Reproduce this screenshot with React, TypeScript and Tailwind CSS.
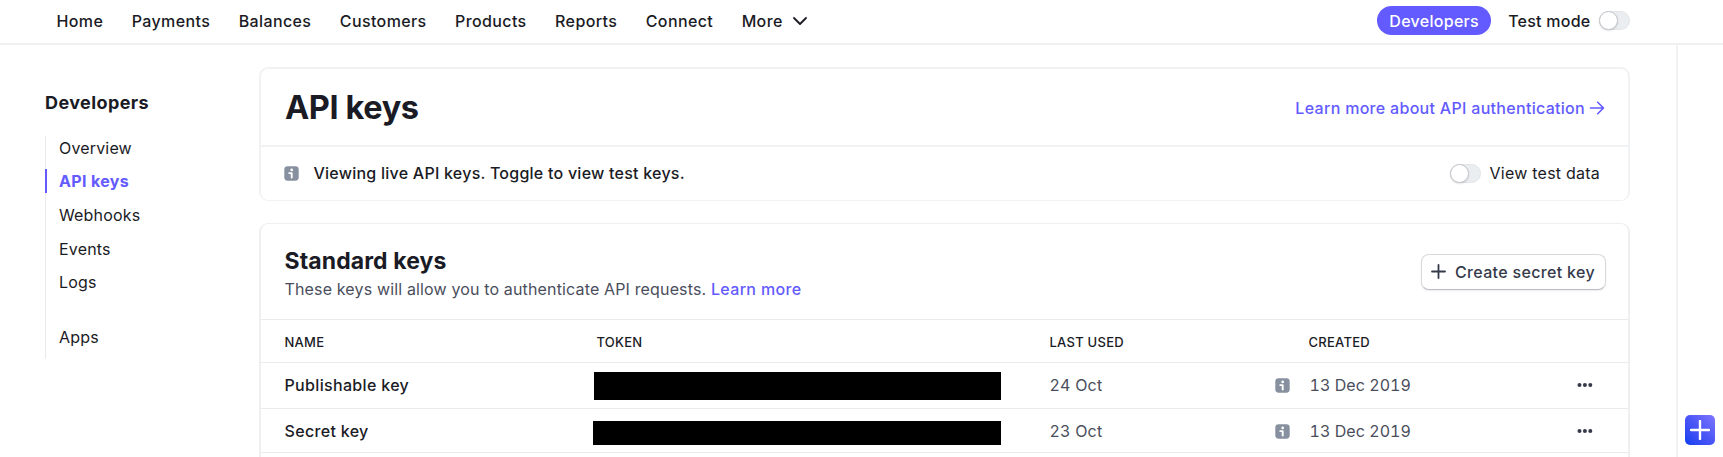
const NAV = ["Home", "Payments", "Balances", "Customers", "Products", "Reports", "Connect"];

const ROWS = [
  {
    name: "Publishable key",
    used: "24 Oct",
    created: "13 Dec 2019",
    row: "h-[46px] pb-px",
    bar: "ml-px w-[407px] h-[28px] mt-px",
  },
  {
    name: "Secret key",
    used: "23 Oct",
    created: "13 Dec 2019",
    row: "h-[44px] pt-px",
    bar: "w-[408px] h-[24px] mt-[4px]",
  },
];

const COLUMNS =
  "grid grid-cols-[308px_457px_225px_35px_267.5px_1fr] items-center pl-[24.5px] border-b border-[#ebebee]";

function Toggle() {
  return (
    <span className="flex h-[19px] w-[31px] items-center rounded-full border border-[#e3e5e8] bg-[#ebeef1]">
      <span className="-ml-px size-[19px] shrink-0 rounded-full border border-[#c4c6cb] bg-white shadow-[0_1px_2px_rgba(0,0,0,0.12)]" />
    </span>
  );
}

function InfoIcon() {
  return (
    <svg viewBox="0 0 15 15" className="size-[15px] shrink-0">
      <rect x="0.3" y="0.3" width="14.4" height="14.4" rx="3.4" fill="#87909f" />
      <circle cx="7.7" cy="3.9" r="1.35" fill="#fff" />
      <path d="M5.2 7.1H7.7V11.6" fill="none" stroke="#fff" strokeWidth="1.9" strokeLinecap="round" strokeLinejoin="round" />
    </svg>
  );
}

function Dots() {
  return (
    <svg viewBox="0 0 16 6" className="h-1.5 w-4" fill="#353a4b">
      <circle cx="2.5" cy="3" r="2" />
      <circle cx="7.9" cy="3" r="2" />
      <circle cx="13.3" cy="3" r="2" />
    </svg>
  );
}

function SideItem({ label }: { label: string }) {
  return <li className="flex h-6 items-center pl-[13px] tracking-[0.17px]">{label}</li>;
}

export default function App() {
  return (
    <div className="relative flex h-[457px] w-full flex-col overflow-hidden bg-white font-['Inter',sans-serif] text-base text-[#1a1b25]">
      <header className="flex h-[45px] shrink-0 items-center justify-between border-b-2 border-[#f0f0f2] pr-[93.5px] pb-[2px] pl-[56.5px]">
        <nav className="flex items-center gap-[28.5px] font-[450] tracking-[0.38px]">
          {NAV.map((item) => (
            <a key={item}>{item}</a>
          ))}
          <a className="flex items-center gap-[9px]">
            More
            <svg viewBox="0 0 16 10" className="mt-px h-2.5 w-4" fill="none" stroke="#1a1b25" strokeWidth="1.8" strokeLinecap="round" strokeLinejoin="round">
              <path d="M2 2L8 8L14 2" />
            </svg>
          </a>
        </nav>
        <div className="flex items-center font-[450]">
          <a className="flex h-[29px] w-[114px] items-center justify-center rounded-full bg-[#635bff] tracking-[0.3px] text-white">
            Developers
          </a>
          <span className="mr-2 ml-[17px] tracking-[0.25px]">Test mode</span>
          <Toggle />
        </div>
      </header>

      <div className="flex min-h-0 flex-1">
        <aside className="w-[259px] shrink-0 pt-[45px] pl-11">
          <h2 className="flex h-6 items-center pl-px text-[18px] font-bold tracking-[0.4px]">Developers</h2>
          <ul className="mt-[21.8px] ml-px flex h-[223px] flex-col gap-[9.6px] border-l border-[#e9e9ed]">
            <SideItem label="Overview" />
            <li className="-ml-px flex h-6 items-center border-l-2 border-[#635bff] pl-3 font-bold tracking-[0.35px] text-[#635bff]">
              API keys
            </li>
            <SideItem label="Webhooks" />
            <SideItem label="Events" />
            <SideItem label="Logs" />
            <li className="mt-[21.5px] flex h-6 items-center pl-[13px] tracking-[0.17px]">Apps</li>
          </ul>
        </aside>

        <main className="flex w-[1371px] shrink-0 flex-col gap-[22px] pt-[22px]">
          <section className="h-[134px] shrink-0 rounded-[9px] border-x-2 border-t-2 border-b border-[#f1f2f4]">
            <div className="flex h-[78px] items-center justify-between border-b-2 border-[#f1f2f4] pr-[23px] pl-6">
              <h1 className="mt-[2px] text-[32.5px] leading-10 font-bold tracking-[-0.4px]">API keys</h1>
              <a className="mt-px flex items-center gap-1 font-[450] tracking-[0.3px] text-[#635bff]">
                Learn more about API authentication
                <svg viewBox="0 0 16 14" className="h-3.5 w-4" fill="none" stroke="#635bff" strokeWidth="1.6" strokeLinecap="round" strokeLinejoin="round">
                  <path d="M1.5 7H14.3M8.7 1.2L14.5 7L8.7 12.8" />
                </svg>
              </a>
            </div>
            <div className="flex h-[52px] items-center justify-between pr-7 pl-[23px]">
              <div className="flex items-center gap-[14.5px] font-[450] tracking-[0.24px]">
                <InfoIcon />
                Viewing live API keys. Toggle to view test keys.
              </div>
              <div className="flex items-center gap-[9px] tracking-[0.23px]">
                <Toggle />
                View test data
              </div>
            </div>
          </section>

          <section className="h-[260px] shrink-0 rounded-t-[9px] border-x-2 border-t border-[#efeff2]">
            <div className="flex h-24 items-center justify-between border-b border-[#ebebee] pr-[22.5px] pl-[23.5px]">
              <div className="mt-1">
                <h2 className="text-[23px] leading-[30px] font-bold tracking-[0.1px]">Standard keys</h2>
                <p className="leading-[26px] tracking-[0.15px] text-[#4a4e5c]">
                  These keys will allow you to authenticate API requests.{" "}
                  <a className="font-[450] tracking-[0.33px] text-[#635bff]">Learn more</a>
                </p>
              </div>
              <button className="flex h-9 w-[185px] items-center gap-[9px] rounded-lg border border-[#d8d9dd] border-b-[#bcbec4] bg-white pl-[9.5px] font-[450] tracking-[0.33px] whitespace-nowrap text-[#353a4b] shadow-[0_1px_2px_rgba(0,0,0,0.08)]">
                <svg viewBox="0 0 15 15" className="size-[15px] shrink-0" fill="none" stroke="#353a4b" strokeWidth="1.8" strokeLinecap="round">
                  <path d="M7.5 1V14M1 7.5H14" />
                </svg>
                Create secret key
              </button>
            </div>
            <div className={`${COLUMNS} -ml-px h-[43px] pt-[3px] text-[13px] font-medium tracking-[0.25px]`}>
              <span>NAME</span>
              <span className="pl-[4px]">TOKEN</span>
              <span>LAST USED</span>
              <span />
              <span className="-ml-px">CREATED</span>
            </div>
            {ROWS.map((r) => (
              <div key={r.name} className={`${COLUMNS} -ml-px ${r.row}`}>
                <span className="font-[450] tracking-[0.33px]">{r.name}</span>
                <span className={`bg-black ${r.bar}`} />
                <span className="tracking-[0.2px] text-[#4a4e5c] tabular-nums">{r.used}</span>
                <InfoIcon />
                <span className="tracking-[0.05px] text-[#4a4e5c] tabular-nums">{r.created}</span>
                <Dots />
              </div>
            ))}
          </section>
        </main>

        <div className="ml-[46px] border-l-2 border-[#f0f1f3]" />
      </div>

      <button className="absolute top-[415px] left-[1685px] flex size-[30px] items-center justify-center rounded-[5px] bg-linear-to-tr from-[#0a3df0] via-[#4a55f5] to-[#8075ff]">
        <svg viewBox="0 0 20 20" className="size-5" fill="none" stroke="#fff" strokeWidth="2.4" strokeLinecap="round">
          <path d="M10 1V19M1 10H19" />
        </svg>
      </button>
    </div>
  );
}
